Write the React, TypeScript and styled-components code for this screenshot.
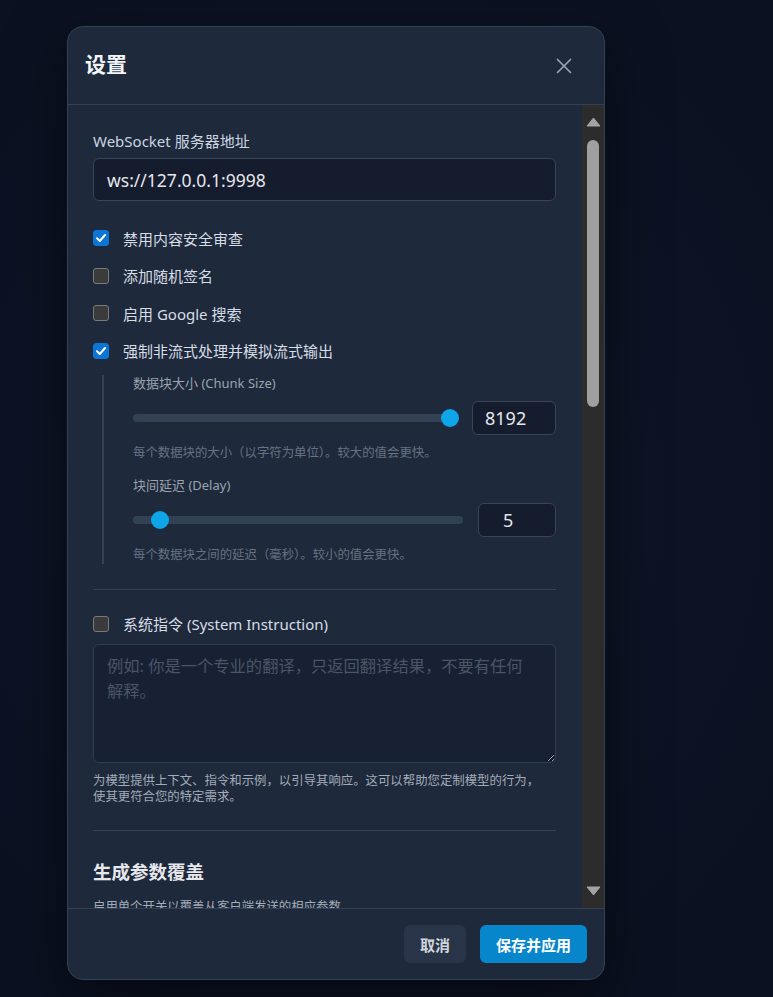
import React from "react";
import styled, { createGlobalStyle } from "styled-components";
import { X } from "lucide-react";

const GlobalStyle = createGlobalStyle`
  html, body {
    margin: 0;
    padding: 0;
    background: #0c1222;
  }
  body {
    font-family: "Segoe UI", "Noto Sans", "Noto Sans CJK SC", sans-serif;
    color: #e2e8f0;
  }
`;

const Page = styled.div`
  width: 773px;
  height: 997px;
  background: radial-gradient(ellipse 70% 60% at 45% 50%, #111a2e 0%, #0c1324 60%, #0b1121 100%);
  padding: 26px 0 0 67px;
  box-sizing: border-box;
  overflow: hidden;
`;

const Modal = styled.div`
  width: 538px;
  height: 954px;
  box-sizing: border-box;
  background: #1e293b;
  border: 1px solid #334155;
  border-radius: 16px;
  display: flex;
  flex-direction: column;
  overflow: hidden;
  box-shadow: 0 20px 60px rgba(0, 0, 0, 0.5);
`;

const Header = styled.div`
  height: 77px;
  flex-shrink: 0;
  display: flex;
  align-items: center;
  justify-content: space-between;
  padding: 0 27px 0 17px;
  border-bottom: 1px solid #334155;

  h2 {
    margin: 0 0 6px;
    font-size: 21px;
    font-weight: 700;
    color: #f1f5f9;
  }
`;

const CloseButton = styled.button`
  background: none;
  border: none;
  padding: 0;
  color: #94a3b8;
  display: flex;
  cursor: pointer;
`;

const BodyRow = styled.div`
  flex: 1;
  min-height: 0;
  display: flex;
`;

const Content = styled.div`
  flex: 1;
  overflow: hidden;
  padding: 26px 26px 0 25px;
  display: flex;
  flex-direction: column;

  & > * {
    flex-shrink: 0;
  }
`;

const Scrollbar = styled.div`
  width: 22px;
  flex-shrink: 0;
  background: #2c2c2c;
  display: flex;
  flex-direction: column;
  align-items: center;
`;

const ArrowBox = styled.div`
  height: 34px;
  width: 100%;
  display: flex;
  align-items: center;
  justify-content: center;
`;

const ScrollTrack = styled.div`
  flex: 1;
  width: 100%;
  display: flex;
  justify-content: center;
`;

const ScrollThumb = styled.div`
  margin-top: 1px;
  width: 12px;
  height: 267px;
  border-radius: 6px;
  background: #9f9f9f;
`;

const FieldLabel = styled.div`
  font-size: 15px;
  line-height: 20px;
  color: #cbd5e1;
  margin-bottom: 7px;
`;

const TextInput = styled.div`
  height: 43px;
  box-sizing: border-box;
  background: #151c2e;
  border: 1px solid #3b4558;
  border-radius: 6px;
  padding: 0 13px;
  display: flex;
  align-items: center;
  font-size: 17.5px;
  color: #e5e7eb;
`;

const CheckList = styled.div<{ $top: number }>`
  margin-top: ${(p) => p.$top}px;
  display: flex;
  flex-direction: column;
  gap: 15.67px;
`;

const CheckRow = styled.label`
  height: 22px;
  display: flex;
  align-items: center;
  gap: 14px;
  font-size: 15px;
  color: #d7dde6;
`;

const Box = styled.span<{ $checked?: boolean }>`
  width: 16px;
  height: 16px;
  box-sizing: border-box;
  border-radius: 3px;
  display: flex;
  align-items: center;
  justify-content: center;
  background: ${(p) => (p.$checked ? "#0b76d6" : "#3b3b3b")};
  border: 1px solid ${(p) => (p.$checked ? "#0b76d6" : "#7a7a7a")};
`;

const Nested = styled.div`
  margin: 13px 0 0 9px;
  border-left: 2px solid #374151;
  padding-left: 29px;
  display: flex;
  flex-direction: column;
`;

const SubLabel = styled.div<{ $top?: number }>`
  margin-top: ${(p) => p.$top ?? 0}px;
  font-size: 13px;
  line-height: 17px;
  color: #9ca3af;
`;

const SliderRow = styled.div`
  margin-top: 9px;
  display: flex;
  align-items: center;
  gap: 15px;
`;

const Track = styled.div`
  flex: 1;
  height: 8px;
  border-radius: 4px;
  background: #334155;
  position: relative;
`;

const Thumb = styled.span`
  position: absolute;
  top: 50%;
  width: 18px;
  height: 18px;
  margin-top: -9px;
  border-radius: 50%;
  background: #0ea5e9;
`;

const NumberBox = styled.div<{ $w: number; $pad: number }>`
  width: ${(p) => p.$w}px;
  height: 34px;
  box-sizing: border-box;
  background: #151c2e;
  border: 1px solid #3b4558;
  border-radius: 6px;
  padding-left: ${(p) => p.$pad}px;
  display: flex;
  align-items: center;
  font-size: 18px;
  color: #e5e7eb;
`;

const Hint = styled.div<{ $top?: number; $light?: boolean; $max?: number }>`
  margin-top: ${(p) => p.$top ?? 0}px;
  max-width: ${(p) => (p.$max ? `${p.$max}px` : "none")};
  font-size: 12.4px;
  line-height: 16.5px;
  color: ${(p) => (p.$light ? "#a3acb9" : "#677285")};
`;

const Divider = styled.div<{ $top: number }>`
  margin-top: ${(p) => p.$top}px;
  height: 1px;
  background: #334155;
`;

const TextArea = styled.textarea`
  margin-top: 9px;
  height: 119px;
  box-sizing: border-box;
  background: #182034;
  border: 1px solid #323d4f;
  border-radius: 6px;
  padding: 9px 24px 10px 13px;
  font-family: inherit;
  font-size: 16.3px;
  line-height: 25px;
  color: #e5e7eb;
  color-scheme: dark;
  outline: none;
  resize: vertical;

  &::placeholder {
    color: #4b5565;
  }
`;

const SectionTitle = styled.h3`
  margin: 29px 0 0;
  font-size: 18.5px;
  line-height: 24px;
  font-weight: 700;
  color: #e5e7eb;
`;

const Footer = styled.div`
  height: 71px;
  box-sizing: border-box;
  flex-shrink: 0;
  border-top: 1px solid #334155;
  display: flex;
  align-items: flex-start;
  justify-content: flex-end;
  gap: 14px;
  padding: 16px 17px 0 0;
`;

const Button = styled.button<{ $primary?: boolean }>`
  height: 38px;
  padding: 0 16px;
  border: none;
  border-radius: 6px;
  font-family: inherit;
  font-size: 15px;
  font-weight: 700;
  color: ${(p) => (p.$primary ? "#ffffff" : "#d1d5db")};
  background: ${(p) => (p.$primary ? "#0786cb" : "#283548")};
`;

const Check = ({ checked, label }: { checked?: boolean; label: string }) => (
  <CheckRow>
    <Box $checked={checked}>
      {checked && (
        <svg width="12" height="12" viewBox="0 0 12 12">
          <path d="M2 6.3 L4.8 9 L10 3" fill="none" stroke="#fff" strokeWidth="2" strokeLinecap="round" strokeLinejoin="round" />
        </svg>
      )}
    </Box>
    <span>{label}</span>
  </CheckRow>
);

const Slider = ({ value, min, max }: { value: number; min: number; max: number }) => {
  const pct = (value - min) / (max - min);
  return (
    <Track>
      <Thumb style={{ left: `calc(${pct} * (100% - 18px) + 2px)` }} />
    </Track>
  );
};

const App = () => {
  return (
    <>
      <GlobalStyle />
      <Page>
        <Modal>
          <Header>
            <h2>设置</h2>
            <CloseButton>
              <X size={26} strokeWidth={1.6} />
            </CloseButton>
          </Header>
          <BodyRow>
            <Content>
              <FieldLabel>WebSocket 服务器地址</FieldLabel>
              <TextInput>ws://127.0.0.1:9998</TextInput>

              <CheckList $top={26}>
                <Check checked label="禁用内容安全审查" />
                <Check label="添加随机签名" />
                <Check label="启用 Google 搜索" />
                <Check checked label="强制非流式处理并模拟流式输出" />
              </CheckList>

              <Nested>
                <SubLabel $top={0}>数据块大小 (Chunk Size)</SubLabel>
                <SliderRow>
                  <Slider value={8192} min={0} max={8192} />
                  <NumberBox $w={84} $pad={12}>8192</NumberBox>
                </SliderRow>
                <Hint $top={10}>每个数据块的大小（以字符为单位）。较大的值会更快。</Hint>
                <SubLabel $top={16}>块间延迟 (Delay)</SubLabel>
                <SliderRow>
                  <Slider value={5} min={0} max={100} />
                  <NumberBox $w={78} $pad={24}>5</NumberBox>
                </SliderRow>
                <Hint $top={10}>每个数据块之间的延迟（毫秒）。较小的值会更快。</Hint>
              </Nested>

              <Divider $top={25} />

              <CheckList $top={23}>
                <Check label="系统指令 (System Instruction)" />
              </CheckList>
              <TextArea
                readOnly
                placeholder="例如: 你是一个专业的翻译，只返回翻译结果，不要有任何解释。"
              />
              <Hint $top={10} $light $max={455}>
                为模型提供上下文、指令和示例，以引导其响应。这可以帮助您定制模型的行为，使其更符合您的特定需求。
              </Hint>

              <Divider $top={24} />

              <SectionTitle>生成参数覆盖</SectionTitle>
              <Hint $top={15} $light>启用单个开关以覆盖从客户端发送的相应参数。</Hint>
            </Content>
            <Scrollbar>
              <ArrowBox>
                <svg width="15" height="10" viewBox="0 0 15 10">
                  <path d="M7.5 1 L14 9 L1 9 Z" fill="#a3a3a3" stroke="#a3a3a3" strokeLinejoin="round" />
                </svg>
              </ArrowBox>
              <ScrollTrack>
                <ScrollThumb />
              </ScrollTrack>
              <ArrowBox>
                <svg width="15" height="10" viewBox="0 0 15 10">
                  <path d="M1 1 L14 1 L7.5 9 Z" fill="#a3a3a3" stroke="#a3a3a3" strokeLinejoin="round" />
                </svg>
              </ArrowBox>
            </Scrollbar>
          </BodyRow>
          <Footer>
            <Button>取消</Button>
            <Button $primary>保存并应用</Button>
          </Footer>
        </Modal>
      </Page>
    </>
  );
};

export default App;
